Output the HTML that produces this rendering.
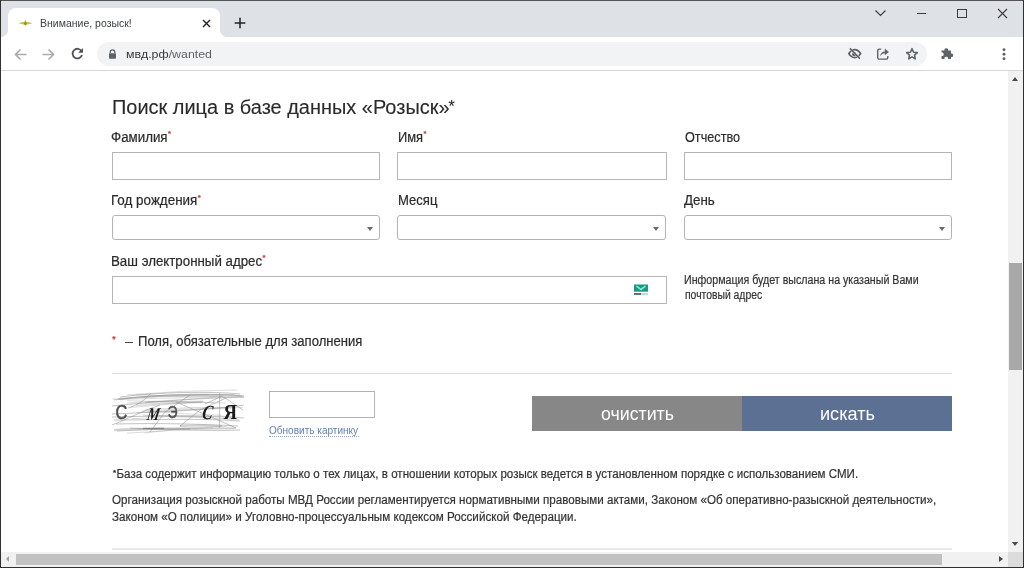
<!DOCTYPE html>
<html><head><meta charset="utf-8">
<style>
html,body{margin:0;padding:0;width:1024px;height:568px;overflow:hidden;background:#3a3a3a;font-family:"Liberation Sans",sans-serif;}
.a{position:absolute}
.t{position:absolute;white-space:nowrap;transform-origin:0 0;line-height:1;-webkit-text-stroke:0.2px currentColor}
.ns{-webkit-text-stroke:0}
.lab{font-size:14px;color:#2b2b2b}
.req{color:#c9403a;font-size:8px;font-weight:bold;position:relative;top:-5.5px;margin-left:0.5px}
.inp{position:absolute;box-sizing:border-box;border:1px solid #b5b5b5;background:#fff}
.sel{position:absolute;box-sizing:border-box;border:1px solid #b3b3b3;background:#fff;border-radius:3px}
.arr{position:absolute;width:0;height:0;border-left:3.5px solid transparent;border-right:3.5px solid transparent;border-top:4px solid #6a6a6a}
</style></head><body><div style="position:absolute;left:0;top:0;width:1024px;height:568px;overflow:hidden;filter:blur(0.3px)">
<!-- window frame -->
<div class="a" style="left:1px;top:1px;width:1022px;height:36px;background:#dee1e6"></div>
<!-- active tab -->
<div class="a" style="left:8px;top:8px;width:212px;height:30px;background:#fff;border-radius:8px 8px 0 0"></div>
<div class="a" style="left:0px;top:29px;width:8px;height:8px;background:radial-gradient(circle at 0 0,#dee1e6 8px,#fff 8.5px)"></div>
<div class="a" style="left:220px;top:29px;width:8px;height:8px;background:radial-gradient(circle at 100% 0,#dee1e6 8px,#fff 8.5px)"></div>
<!-- favicon -->
<svg class="a" style="left:18px;top:18px" width="15" height="10" viewBox="0 0 15 10"><path d="M0.7 5.2C4 4.1 6 3.7 7.4 3.4C9 3.7 11 4.1 14.4 5.2C11 6.2 9 6.6 7.4 6.9C6 6.6 4 6.2 0.7 5.2Z" fill="#cbc34c"/><path d="M6.5 5L7.4 1.4L8.3 5L7.4 8.4Z" fill="#aaa33a"/><ellipse cx="7.4" cy="5.4" rx="1.5" ry="1.2" fill="#95902c"/></svg>
<div class="t ns" id="tabt" style="left:39.60px;top:18.9px;font-size:10.3px;color:#3c4043;transform:scaleX(1.0200)">Внимание, розыск!</div>
<svg class="a" style="left:202px;top:19px" width="9" height="9" viewBox="0 0 9 9"><path d="M1 1L8 8M8 1L1 8" stroke="#202124" stroke-width="1.4"/></svg>
<svg class="a" style="left:234px;top:17px" width="12" height="12" viewBox="0 0 12 12"><path d="M6 0.7V11.3M0.7 6H11.3" stroke="#202124" stroke-width="1.5"/></svg>
<!-- window controls -->
<svg class="a" style="left:874px;top:8px" width="13" height="10" viewBox="0 0 13 10"><path d="M1.5 2.5L6.5 7.5L11.5 2.5" stroke="#3c3c3c" stroke-width="1.1" fill="none"/></svg>
<div class="a" style="left:917px;top:13px;width:9px;height:1.2px;background:#3c3c3c"></div>
<div class="a" style="left:957px;top:9px;width:9.5px;height:8.6px;box-sizing:border-box;border:1.2px solid #3c3c3c"></div>
<svg class="a" style="left:997px;top:8px" width="11" height="11" viewBox="0 0 11 11"><path d="M1 1L10 10M10 1L1 10" stroke="#3c3c3c" stroke-width="1.1"/></svg>
<!-- toolbar -->
<div class="a" style="left:1px;top:37px;width:1022px;height:33px;background:#fff"></div>
<div class="a" style="left:1px;top:70px;width:1022px;height:1px;background:#d6d6d6"></div>
<svg class="a" style="left:14px;top:48px" width="13" height="13" viewBox="0 0 13 13"><path d="M12.5 6.5H1.5M6.5 1.5L1.5 6.5L6.5 11.5" stroke="#a9abae" stroke-width="1.7" fill="none"/></svg>
<svg class="a" style="left:42px;top:48px" width="13" height="13" viewBox="0 0 13 13"><path d="M0.5 6.5H11.5M6.5 1.5L11.5 6.5L6.5 11.5" stroke="#a9abae" stroke-width="1.7" fill="none"/></svg>
<svg class="a" style="left:71px;top:47px" width="13" height="13" viewBox="0 0 13 13"><path d="M10.6 4.2A4.8 4.8 0 1 0 11 8" stroke="#4f5256" stroke-width="1.8" fill="none"/><path d="M12 1V5.8H7.2Z" fill="#4f5256"/></svg>
<div class="a" style="left:97px;top:42px;width:830px;height:24px;border-radius:12px;background:#f1f3f4"></div>
<svg class="a" style="left:108px;top:48.6px" width="9" height="10" viewBox="0 0 9 10"><path d="M2.3 4.2V3A2.2 2.2 0 0 1 6.7 3V4.2" stroke="#5f6368" stroke-width="1.3" fill="none"/><rect x="1" y="4.2" width="7" height="5.6" rx="0.8" fill="#5f6368"/></svg>
<div class="t ns" id="url" style="left:126.00px;top:49.1px;font-size:11.3px;color:#3a3a3a;transform:scaleX(1.0950)">мвд.рф<span style="color:#5f6368">/wanted</span></div>
<!-- eye slash -->
<svg class="a" style="left:847px;top:47px" width="15" height="14" viewBox="0 0 15 14"><path d="M1.8 6.6C3.6 3.8 5.4 2.6 7.7 2.6S11.8 3.8 13.6 6.6C11.8 9.4 10 10.6 7.7 10.6S3.6 9.4 1.8 6.6Z" stroke="#5a5e62" stroke-width="1.7" fill="none"/><circle cx="7.2" cy="7.2" r="2.1" fill="#5a5e62"/><path d="M2.9 1.4L12.9 11.6" stroke="#f1f3f4" stroke-width="2.2"/><path d="M2.9 1.4L12.9 11.6" stroke="#5a5e62" stroke-width="1.5"/></svg>
<!-- share -->
<svg class="a" style="left:876px;top:47px" width="14" height="14" viewBox="0 0 14 14"><path d="M5.2 2.1H3.2A1.5 1.5 0 0 0 1.7 3.6V10.6A1.5 1.5 0 0 0 3.2 12.1H10.3A1.5 1.5 0 0 0 11.8 10.6V9" stroke="#5f6368" stroke-width="1.4" fill="none"/><path d="M4.2 9.4C4.4 6.2 6.4 4.4 8.8 4.4V1.6L12.9 4.9L8.8 8.2V6.2C7 6.2 5.6 7.4 4.2 9.4Z" fill="#5f6368"/></svg>
<!-- star -->
<svg class="a" style="left:905.2px;top:47px" width="14" height="14" viewBox="0 0 14 14"><path d="M7.00 1.70 L8.53 5.20 L12.33 5.57 L9.47 8.10 L10.29 11.83 L7.00 9.90 L3.71 11.83 L4.53 8.10 L1.67 5.57 L5.47 5.20Z" stroke="#5f6368" stroke-width="1.6" fill="none" stroke-linejoin="round"/></svg>
<!-- puzzle -->
<svg class="a" style="left:940px;top:46.2px" width="14" height="14" viewBox="0 0 14 14"><path d="M1.5 4.5H4.5A1.8 1.8 0 1 1 8 4.5H11V7.5A1.8 1.8 0 1 1 11 11V13H8A1.8 1.8 0 1 0 4.5 13H1.5V10A1.8 1.8 0 1 0 1.5 6.5Z" fill="#5f6368"/></svg>
<!-- kebab -->
<svg class="a" style="left:1000px;top:46px" width="8" height="16" viewBox="1000 46 8 16"><circle cx="1004" cy="49.8" r="1.45" fill="#5f6368"/><circle cx="1004" cy="54.3" r="1.45" fill="#5f6368"/><circle cx="1004" cy="58.7" r="1.45" fill="#5f6368"/></svg>

<!-- content -->
<div class="a" style="left:1px;top:71px;width:1007px;height:481px;background:#fff"></div>

<div class="t ns" id="h1" style="-webkit-text-stroke:0.12px #2a2a2a;left:111.60px;top:96.9px;font-size:20px;color:#2a2a2a;transform:scaleX(0.9975)">Поиск лица в базе данных «Розыск»<span style="font-size:16px;position:relative;top:-2px;margin-left:-1px">*</span></div>

<div class="t lab" id="l1" style="left:110.80px;top:129.5px;transform:scaleX(0.9520)">Фамилия<span class="req">*</span></div>
<div class="t lab" id="l2" style="left:397.60px;top:129.5px;transform:scaleX(0.9200)">Имя<span class="req">*</span></div>
<div class="t lab" id="l3" style="left:684.60px;top:129.5px;transform:scaleX(0.9050)">Отчество</div>
<div class="inp" style="left:112px;top:152px;width:268px;height:28px"></div>
<div class="inp" style="left:397px;top:152px;width:270px;height:28px"></div>
<div class="inp" style="left:684px;top:152px;width:268px;height:28px"></div>

<div class="t lab" id="l4" style="left:111.00px;top:193.4px;transform:scaleX(0.9590)">Год рождения<span class="req">*</span></div>
<div class="t lab" id="l5" style="left:397.60px;top:193.4px;transform:scaleX(0.9340)">Месяц</div>
<div class="t lab" id="l6" style="left:683.90px;top:193.4px;transform:scaleX(0.9530)">День</div>
<div class="sel" style="left:112px;top:215px;width:268px;height:25px"><div class="arr" style="left:253.5px;top:10.5px"></div></div>
<div class="sel" style="left:397px;top:215px;width:269px;height:25px"><div class="arr" style="left:254.5px;top:10.5px"></div></div>
<div class="sel" style="left:684px;top:215px;width:268px;height:25px"><div class="arr" style="left:253.5px;top:10.5px"></div></div>

<div class="t lab" id="l7" style="left:111.00px;top:253.9px;transform:scaleX(0.9500)">Ваш электронный адрес<span class="req">*</span></div>
<div class="inp" style="left:112px;top:276px;width:555px;height:28px"></div>
<svg class="a" style="left:634px;top:283.5px" width="14" height="12" viewBox="0 0 14 12"><rect x="0" y="0.5" width="14" height="7.2" fill="#1d9683"/><path d="M2.5 2.2L7 5.4L11.5 2.2" stroke="#7cefd6" stroke-width="1.6" fill="none"/><rect x="0" y="9.2" width="7" height="1.6" fill="#3f4f4c"/><rect x="7" y="9.2" width="7" height="1.6" fill="#9adccd"/></svg>

<div class="t" id="info1" style="left:683.80px;top:274px;font-size:12px;color:#333;transform:scaleX(0.8880)">Информация будет выслана на указаный Вами</div>
<div class="t" id="info2" style="left:684.90px;top:289.4px;font-size:12px;color:#333;transform:scaleX(0.8640)">почтовый адрес</div>

<div class="t" style="left:112.2px;top:335.1px;font-size:8.5px;font-weight:bold;color:#c9403a">*</div>
<div class="a" style="left:124.5px;top:341.5px;width:8px;height:1px;background:#444"></div>
<div class="t lab" id="note" style="left:138.30px;top:334.1px;transform:scaleX(0.9330)">Поля, обязательные для заполнения</div>

<div class="a" style="left:112px;top:373px;width:840px;height:1px;background:#dcdcdc"></div>

<!-- captcha -->
<svg class="a" style="left:104px;top:388px" width="146" height="50" viewBox="104 388 146 50">
<defs><filter id="bl" x="-5%" y="-5%" width="110%" height="110%"><feGaussianBlur stdDeviation="0.4"/></filter></defs>
<g filter="url(#bl)">
<g stroke="#808080" stroke-width="0.8" fill="none" stroke-opacity="0.6"><path d="M114 400 C150 395 200 392 244 396"/><path d="M120 397 C160 392 210 391 240 394"/><path d="M112 406 C150 402 200 398 244 397"/><path d="M151 393 C145 400 138 405 128 408"/><path d="M112 425 C130 418 140 412 160 405"/><path d="M112 414 C160 412 210 410 244 405"/><path d="M114 420 C160 420 200 418 240 421"/><path d="M116 424 C160 423 200 424 238 426"/><path d="M117 431 C160 429 200 428 236 428"/><path d="M130 428 C180 430 210 431 240 430"/><path d="M176 402 L211 417 L236 428"/><path d="M219.6 393 L219.6 428"/><path d="M205 404 L222 396 L243 410"/><path d="M150 432 L165 412 L190 395"/><path d="M112 417 C150 416 190 415 244 418"/><path d="M180 426 L200 410 L226 398"/></g>
<g stroke="#8c8c8c" stroke-width="0.7" fill="none" stroke-opacity="0.45"><path d="M136.0 405.6 Q169.6 403.7 203.3 401.4"/><path d="M130.3 407.4 Q166.0 404.3 201.7 402.1"/><path d="M127.0 394.9 Q182.1 390.2 237.2 390.0"/><path d="M147.9 401.4 Q186.9 401.5 226.0 402.9"/><path d="M144.3 433.0 Q178.7 428.1 213.0 427.6"/><path d="M142.6 396.9 Q175.4 396.3 208.1 394.6"/><path d="M131.9 418.8 Q167.4 415.4 202.8 417.3"/><path d="M127.1 400.7 Q170.6 402.2 214.1 402.8"/><path d="M141.8 411.0 Q186.6 408.3 231.5 408.6"/><path d="M145.0 416.1 Q188.9 415.0 232.8 416.4"/><path d="M126.7 433.2 Q180.4 428.8 234.1 428.6"/><path d="M136.7 412.5 Q185.6 410.2 234.4 407.0"/><path d="M137.8 428.8 Q182.3 428.1 226.7 426.5"/><path d="M147.8 411.2 Q184.6 414.2 221.3 415.2"/><path d="M135.9 394.5 Q190.3 397.7 244.7 397.0"/><path d="M136.7 404.0 Q168.9 403.0 201.0 402.6"/><path d="M112.4 399.1 Q173.5 394.5 234.6 394.5"/><path d="M144.9 402.4 Q174.2 401.4 203.6 401.1"/><path d="M142.8 415.1 Q190.8 416.0 238.9 419.7"/><path d="M145.4 409.4 Q194.2 406.5 243.1 407.7"/><path d="M119.3 399.4 Q170.6 398.3 221.8 396.2"/><path d="M126.8 403.0 Q171.7 400.5 216.6 397.1"/></g>
<g stroke="#9a9a9a" stroke-width="2" fill="none" stroke-opacity="0.45">
<path d="M118 399 C160 395 200 394 242 396"/>
<path d="M180 426 C200 425 210 426 222 426"/>
<path d="M114 430 C140 428 160 428 190 429"/>
</g>
<path d="M143 428.5 L164 428.5" stroke="#707070" stroke-width="1.4" stroke-opacity="0.7"/>
<text transform="translate(115.6 419) scale(0.78 1)" font-family="Liberation Sans" font-size="21" fill="#505050" stroke="#505050" stroke-width="0.6">С</text>
<text transform="translate(146 420) skewX(-18) scale(0.66 0.95)" font-family="Liberation Serif" font-weight="bold" font-size="19" fill="#1a1a1a">М</text>
<text transform="translate(167.8 417.5) scale(0.8 1)" font-family="Liberation Sans" font-size="17" fill="#505050" stroke="#505050" stroke-width="0.5">Э</text>
<text transform="translate(200.5 419.4) skewX(-16) scale(0.78 1)" font-family="Liberation Serif" font-weight="bold" font-size="20" fill="#1a1a1a">С</text>
<text transform="translate(223.5 419.4) scale(0.85 1)" font-family="Liberation Serif" font-weight="bold" font-size="22" fill="#1a1a1a">Я</text>
</g>
</svg>
<div class="inp" style="left:269px;top:391px;width:106px;height:27px;border-color:#b2b2b2"></div>
<div class="t ns" id="refresh" style="left:269.40px;top:424.6px;font-size:11px;color:#6080b4;transform:scaleX(0.9130)">Обновить картинку</div>
<div class="a" style="left:269px;top:436px;width:90px;height:0;border-top:1px dotted #90a6cc"></div>

<div class="a" style="left:532px;top:396px;width:210px;height:35px;background:#878787"></div>
<div class="a" style="left:742px;top:396px;width:210px;height:35px;background:#5c7094"></div>
<div class="t ns" id="b1" style="left:601.00px;top:405.2px;font-size:18.4px;color:#fff;transform:scaleX(0.9650)">очистить</div>
<div class="t ns" id="b2" style="left:820.00px;top:405.2px;font-size:18.4px;color:#fff;transform:scaleX(0.9850)">искать</div>

<div class="t" id="f1" style="left:112.80px;top:467.8px;font-size:12px;color:#333;transform:scaleX(0.9640)"><span style="position:relative;top:-2.5px;font-size:8px;font-weight:bold;margin-right:0.5px">*</span>База содержит информацию только о тех лицах, в отношении которых розыск ведется в установленном порядке с использованием СМИ.</div>
<div class="t" id="f2" style="left:112.00px;top:493.8px;font-size:12px;color:#333;transform:scaleX(0.9680)">Организация розыскной работы МВД России регламентируется нормативными правовыми актами, Законом «Об оперативно-разыскной деятельности»,</div>
<div class="t" id="f3" style="left:112.00px;top:510.9px;font-size:12px;color:#333;transform:scaleX(0.9700)">Законом «О полиции» и Уголовно-процессуальным кодексом Российской Федерации.</div>

<div class="a" style="left:112px;top:548px;width:840px;height:1.5px;background:#e8e8e8"></div>

<!-- scrollbars -->
<div class="a" style="left:1008px;top:71px;width:15px;height:481px;background:#f1f1f1"></div>
<div class="a" style="left:1009px;top:263px;width:13px;height:107px;background:#a8a8a8"></div>
<div class="a" style="left:1011.9px;top:76.5px;width:0;height:0;border-left:3.6px solid transparent;border-right:3.6px solid transparent;border-bottom:4px solid #4a4a4a"></div>
<div class="a" style="left:1011.9px;top:542.2px;width:0;height:0;border-left:3.6px solid transparent;border-right:3.6px solid transparent;border-top:4px solid #4a4a4a"></div>
<div class="a" style="left:1px;top:552px;width:1007px;height:15px;background:#f1f1f1"></div>
<div class="a" style="left:16px;top:554px;width:926px;height:11px;background:#c1c1c1"></div>
<div class="a" style="left:6px;top:555.5px;width:0;height:0;border-top:3.5px solid transparent;border-bottom:3.5px solid transparent;border-right:3.5px solid #a3a3a3"></div>
<div class="a" style="left:999.2px;top:556px;width:0;height:0;border-top:3.8px solid transparent;border-bottom:3.8px solid transparent;border-left:4.3px solid #4a4a4a"></div>
<div class="a" style="left:1008px;top:552px;width:15px;height:15px;background:#dcdcdc"></div>
<div class="a" style="left:0;top:0;width:1024px;height:1px;background:#555"></div>
<div class="a" style="left:0;top:0;width:1px;height:568px;background:#303030"></div>
<div class="a" style="left:1023px;top:0;width:1px;height:568px;background:#303030"></div>
<div class="a" style="left:0;top:567px;width:1024px;height:1px;background:#303030"></div>
</div></body></html>
